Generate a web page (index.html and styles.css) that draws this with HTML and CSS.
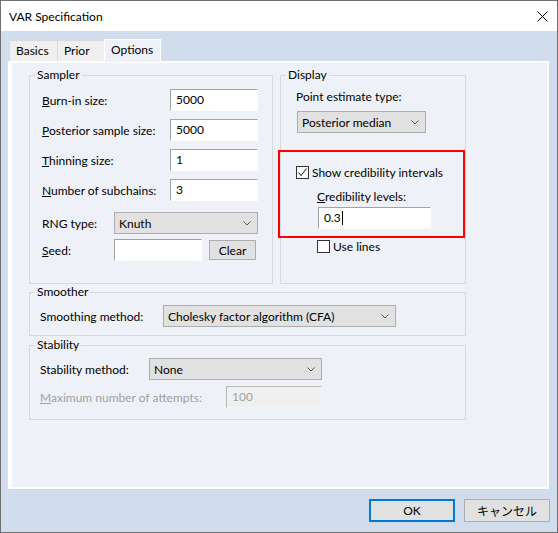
FILE: index.html
```html
<!DOCTYPE html>
<html>
<head>
<meta charset="utf-8">
<title>VAR Specification</title>
<link rel="stylesheet" href="styles.css">
</head>
<body>
<div class="window">
  <div class="titlebar">
    <span class="title">VAR Specification</span>
    <svg class="close" width="11" height="11" viewBox="0 0 11 11"><path d="M0.5 0.5L10.5 10.5M10.5 0.5L0.5 10.5" stroke="#000" stroke-width="1" fill="none"/></svg>
  </div>
  <div class="client">
    <div class="tabs">
      <div class="tab t-basics">Basics</div>
      <div class="tab t-prior">Prior</div>
      <div class="tab active t-options">Options</div>
    </div>
    <div class="panel">
      <div class="toprow">
        <fieldset class="group sampler">
          <legend>Sampler</legend>
          <div class="gbody">
            <div class="row"><span class="lbl-a"><u>B</u>urn-in size:</span><div class="edit w88">5000</div></div>
            <div class="row r-gap8"><span class="lbl-a"><u>P</u>osterior sample size:</span><div class="edit w88">5000</div></div>
            <div class="row r-gap8"><span class="lbl-a"><u>T</u>hinning size:</span><div class="edit w88">1</div></div>
            <div class="row r-gap8"><span class="lbl-a"><u>N</u>umber of subchains:</span><div class="edit w88">3</div></div>
            <div class="row r-gap11"><span class="lbl-b">RNG type:</span><div class="combo w144"><span>Knuth</span><svg class="chev" width="8" height="5" viewBox="0 0 8 5"><path d="M0.5 0.5L4 4L7.5 0.5" stroke="#555" fill="none"/></svg></div></div>
            <div class="row r-gap5"><span class="lbl-b"><u>S</u>eed:</span><div class="edit w88"></div><div class="btn clear">Clear</div></div>
          </div>
        </fieldset>
        <fieldset class="group display">
          <legend>Display</legend>
          <div class="gbody">
            <div class="line">Point estimate type:</div>
            <div class="combo pe-combo"><span>Posterior median</span><svg class="chev" width="8" height="5" viewBox="0 0 8 5"><path d="M0.5 0.5L4 4L7.5 0.5" stroke="#555" fill="none"/></svg></div>
            <div class="check-row show-ci">
              <span class="checkbox"><svg width="11" height="11" viewBox="0 0 11 11"><path d="M1.5 5.5L4 8.5L9.5 1.5" stroke="#333" stroke-width="1.1" fill="none"/></svg></span>
              <span class="check-label">Show credibility intervals</span>
            </div>
            <div class="line cred-label"><u>C</u>redibility levels:</div>
            <div class="edit cred-edit">0.3<span class="caret"></span></div>
            <div class="check-row use-lines">
              <span class="checkbox"></span>
              <span class="check-label">Use lines</span>
            </div>
          </div>
        </fieldset>
      </div>
      <fieldset class="group smoother">
        <legend>Smoother</legend>
        <div class="gbody">
          <div class="row"><span class="lbl-c">Smoothing method:</span><div class="combo w233"><span>Cholesky factor algorithm (CFA)</span><svg class="chev" width="8" height="5" viewBox="0 0 8 5"><path d="M0.5 0.5L4 4L7.5 0.5" stroke="#555" fill="none"/></svg></div></div>
        </div>
      </fieldset>
      <fieldset class="group stability">
        <legend>Stability</legend>
        <div class="gbody">
          <div class="row"><span class="lbl-d">Stability method:</span><div class="combo w173"><span>None</span><svg class="chev" width="8" height="5" viewBox="0 0 8 5"><path d="M0.5 0.5L4 4L7.5 0.5" stroke="#555" fill="none"/></svg></div></div>
          <div class="row r-gap6"><span class="lbl-e disabled"><u>M</u>aximum number of attempts:</span><div class="edit edit-disabled w96">100</div></div>
        </div>
      </fieldset>
      <div class="highlight"></div>
    </div>
    <div class="buttons">
      <div class="btn dlg default">OK</div>
      <div class="btn dlg">キャンセル</div>
    </div>
  </div>
</div>
</body>
</html>
```

FILE: styles.css
```css
html, body {
  margin: 0;
  padding: 0;
  background: #3b4a5e;
}

.window {
  width: 558px;
  height: 533px;
  box-sizing: border-box;
  border: 1px solid #707070;
  background: #d1dced;
  font-family: Lato, "Noto Sans CJK JP", sans-serif;
  font-size: 12px;
  color: #000;
  display: flex;
  flex-direction: column;
}

.titlebar {
  height: 30px;
  flex: none;
  background: #fff;
  display: flex;
  align-items: center;
  padding-left: 8px;
}

.title {
  font-size: 12px;
}

.close {
  margin-left: auto;
  margin-right: 9px;
}

.client {
  flex: 1;
  padding: 8px 7px 0 7px;
  display: flex;
  flex-direction: column;
}

.tabs {
  display: flex;
  align-items: flex-end;
  height: 22px;
  padding-left: 1px;
}

.tab {
  box-sizing: border-box;
  height: 21px;
  border: 1px solid #d9d9d9;
  border-bottom: none;
  background: #f0f0f0;
  padding-left: 6px;
  line-height: 20px;
}

.t-basics {
  width: 49px;
}

.t-prior {
  width: 46px;
  border-left: none;
  border-right: none;
}

.tab.active {
  width: 57px;
  height: 23px;
  margin-bottom: -1px;
  border-color: #fff;
  background: #eef2f8;
  position: relative;
  z-index: 2;
  line-height: 20px;
}

.panel {
  box-sizing: border-box;
  width: 542px;
  height: 429px;
  border: 1px solid #fff;
  border-right-color: #d7d7d7;
  border-bottom-color: #d7d7d7;
  box-shadow: inset 3px 1px 0 #fff, inset -2px -2px 0 #fff;
  background: #eef2f8;
  padding: 5px 0 0 20px;
  position: relative;
}

.group {
  margin: 0;
  padding: 0;
  min-width: 0;
  box-sizing: border-box;
  border: 1px solid #d6d9de;
}

.group legend {
  margin-left: 5px;
  padding: 0 2px;
  line-height: 16px;
}

.toprow {
  display: flex;
  gap: 7px;
  height: 217px;
}

.sampler {
  width: 244px;
}

.display {
  width: 186px;
}

.sampler .gbody {
  padding: 6px 0 0 12px;
}

.row {
  display: flex;
  align-items: center;
  height: 22px;
}

.r-gap8 { margin-top: 8px; }
.r-gap11 { margin-top: 11px; }
.r-gap5 { margin-top: 5px; }
.r-gap6 { margin-top: 6px; }

.lbl-a { width: 128px; flex: none; }
.lbl-b { width: 72px; flex: none; }
.lbl-c { width: 123px; flex: none; }
.lbl-d { width: 109px; flex: none; }
.lbl-e { width: 186px; flex: none; }

.disabled {
  color: #a0a0a0;
}

.edit {
  box-sizing: border-box;
  height: 22px;
  background: #fff;
  border: 1px solid;
  border-color: #a3a3a3 #fff #fff #a3a3a3;
  padding-left: 5px;
  line-height: 20px;
  flex: none;
}

.edit-disabled {
  background: #f0f0f0;
  border-color: #b9b9b9 #f4f4f4 #f4f4f4 #b9b9b9;
  color: #a0a0a0;
}

.w88 { width: 88px; }
.w96 { width: 96px; }
.w144 { width: 144px; }
.w173 { width: 173px; }
.w233 { width: 233px; }

.combo {
  box-sizing: border-box;
  height: 22px;
  background: #e1e1e1;
  border: 1px solid #adadad;
  display: flex;
  align-items: center;
  padding-left: 4px;
  flex: none;
}

.chev {
  margin-left: auto;
  margin-right: 6px;
}

.btn {
  box-sizing: border-box;
  background: #e1e1e1;
  border: 1px solid #adadad;
  display: flex;
  align-items: center;
  justify-content: center;
}

.clear {
  width: 47px;
  height: 20px;
  margin-left: 7px;
}

.display .gbody {
  padding: 6px 0 0 15px;
}

.line {
  line-height: 16px;
}

.pe-combo {
  width: 129px;
  margin: 6px 0 0 1px;
}

.check-row {
  display: flex;
  align-items: center;
  height: 16px;
}

.show-ci {
  margin-top: 31px;
}

.checkbox {
  box-sizing: border-box;
  width: 13px;
  height: 13px;
  border: 1px solid #333;
  background: #fff;
  display: flex;
  flex: none;
}

.check-label {
  margin-left: 3px;
}

.cred-label {
  margin: 9px 0 0 21px;
}

.cred-edit {
  width: 113px;
  margin: 2px 0 0 22px;
  display: flex;
  align-items: center;
}

.caret {
  display: inline-block;
  width: 1px;
  height: 14px;
  background: #000;
  margin-left: 1px;
}

.use-lines {
  margin: 9px 0 0 21px;
}

.smoother {
  width: 437px;
}

.smoother .gbody {
  padding: 5px 0 8px 10px;
}

.stability {
  width: 437px;
  margin-top: 1px;
}

.stability .gbody {
  padding: 5px 0 11px 10px;
}

.highlight {
  position: absolute;
  left: 269px;
  top: 88px;
  width: 187px;
  height: 88px;
  box-sizing: border-box;
  border: 2px solid #f00;
}

.buttons {
  display: flex;
  justify-content: flex-end;
  gap: 9px;
  margin-top: 9px;
}

.dlg {
  width: 86px;
  height: 23px;
}

.dlg.default {
  border: 2px solid #0078d7;
}
```
